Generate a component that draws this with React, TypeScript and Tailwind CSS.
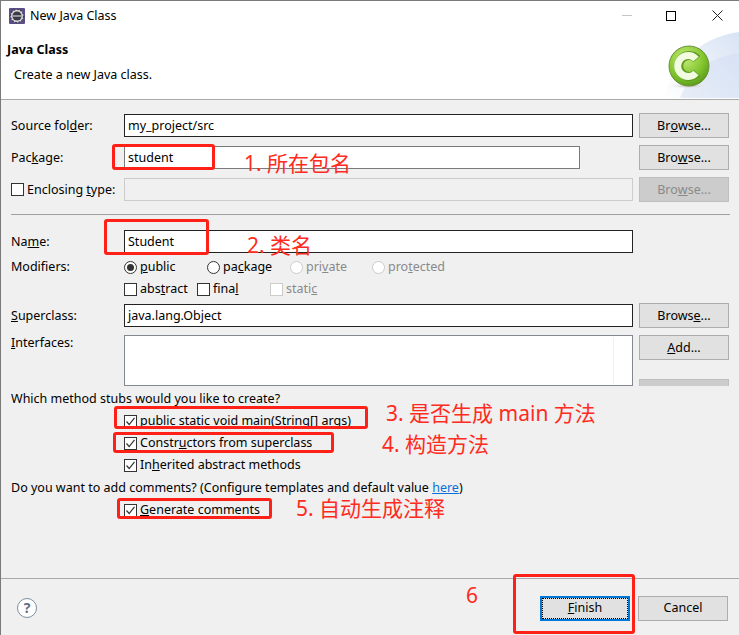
import React from "react";

const Button = ({ children, disabled }: { children: React.ReactNode; disabled?: boolean }) => (
  <div
    className={`w-[90px] h-[25px] flex items-center justify-center border ${
      disabled ? "bg-[#cccccc] border-[#bfbfbf] text-[#8a8a8a]" : "bg-[#e1e1e1] border-[#adadad] text-black"
    }`}
  >
    {children}
  </div>
);

const Check = ({ checked, disabled }: { checked?: boolean; disabled?: boolean }) => (
  <span
    className={`w-[13px] h-[13px] border bg-white flex items-center justify-center shrink-0 ${
      disabled ? "border-[#cccccc]" : "border-[#333333]"
    }`}
  >
    {checked && (
      <svg width="11" height="11" viewBox="0 0 11 11" fill="none">
        <path d="M1.5 5.5 L4.2 8.5 L9.5 1.8" stroke="#333" strokeWidth="1.2" />
      </svg>
    )}
  </span>
);

const Radio = ({ checked, disabled }: { checked?: boolean; disabled?: boolean }) => (
  <span
    className={`w-[13px] h-[13px] rounded-full border bg-white flex items-center justify-center shrink-0 ${
      disabled ? "border-[#cccccc]" : "border-[#333333]"
    }`}
  >
    {checked && <span className="w-[7px] h-[7px] rounded-full bg-[#333333]" />}
  </span>
);

const CheckRow = ({ children, className }: { children: React.ReactNode; className?: string }) => (
  <div className={`flex items-center gap-[3px] h-[22px] pl-[113px] ${className ?? ""}`}>
    <Check checked />
    <span>{children}</span>
  </div>
);

const Label = ({ children }: { children: React.ReactNode }) => <div className="w-[113px] shrink-0">{children}</div>;

const RedBox = ({ className }: { className: string }) => (
  <div className={`absolute border-[3px] border-[#ff2018] rounded-[3px] ${className}`} />
);

const Note = ({ children, className }: { children: React.ReactNode; className: string }) => (
  <div className={`absolute text-[#ff2a20] text-[21px] leading-[26px] whitespace-nowrap ${className}`}>{children}</div>
);

export default function App() {
  return (
    <div
      className="relative w-[739px] h-[635px] overflow-hidden bg-[#f0f0f0] border-l border-t border-[#7a7a7a] text-[12.5px] text-black"
      style={{ fontFamily: '"Noto Sans", "Noto Sans CJK SC", sans-serif' }}
    >
      {/* Title bar + banner */}
      <div className="relative h-[99px] bg-white border-b border-[#a9a9a9]">
        <div className="flex items-center h-[30px] pl-[8px] gap-[5px]">
          <svg width="16" height="16" viewBox="0 0 16 16">
            <rect width="16" height="16" rx="1" fill="#5d4c8c" />
            <circle cx="8" cy="8" r="6.6" fill="#d8d8d8" stroke="#444" strokeWidth="1.4" strokeDasharray="2 1.4" />
            <circle cx="8" cy="8" r="4.6" fill="#3a3a4a" />
            <rect x="3.4" y="7.4" width="9.2" height="1.2" fill="#cfcfcf" />
          </svg>
          <span>New Java Class</span>
        </div>
        <div className="absolute top-[9px] right-[-2px] flex items-center">
          <div className="w-[46px] flex justify-center pl-[4px]">
            <div className="w-[10px] h-px bg-[#c4c4c4]" />
          </div>
          <div className="w-[46px] flex justify-center">
            <div className="w-[10px] h-[10px] border border-black" />
          </div>
          <div className="w-[46px] flex justify-center mr-[1px]">
            <svg width="11" height="11" viewBox="0 0 11 11">
              <path d="M0.5 0.5 L10.5 10.5 M10.5 0.5 L0.5 10.5" stroke="#222" strokeWidth="1" />
            </svg>
          </div>
        </div>
        <div className="pl-[6px] font-bold leading-[16px] mt-[11px]">Java Class</div>
        <div className="pl-[13px] leading-[16px] mt-[9px]">Create a new Java class.</div>
        <svg className="absolute right-0 top-[30px]" width="75" height="67" viewBox="0 0 75 67">
          <defs>
            <linearGradient id="wm" x1="0" y1="1" x2="1" y2="0">
              <stop offset="0" stopColor="#ffffff" />
              <stop offset="1" stopColor="#cfdcf2" />
            </linearGradient>
            <radialGradient id="ball" cx="0.4" cy="0.3" r="0.8">
              <stop offset="0" stopColor="#c6ec7a" />
              <stop offset="0.6" stopColor="#7fc42c" />
              <stop offset="1" stopColor="#4f8f18" />
            </radialGradient>
            <radialGradient id="shadow" cx="0.5" cy="0.5" r="0.5">
              <stop offset="0" stopColor="#b8b8b8" />
              <stop offset="1" stopColor="#ffffff" stopOpacity="0" />
            </radialGradient>
          </defs>
          <path d="M0 67 C8 35 35 6 75 1 V67 Z" fill="url(#wm)" opacity="0.8" />
          <path d="M16 67 C24 45 45 25 75 22 V67 Z" fill="#cfdcf2" opacity="0.45" />
          <ellipse cx="25" cy="55" rx="24" ry="3" fill="url(#shadow)" />
          <circle cx="25" cy="35" r="20" fill="url(#ball)" stroke="#6f8f3a" strokeWidth="1" />
          <path d="M33 28 A10.5 10.5 0 1 0 33 42" fill="none" stroke="#5f9a1e" strokeWidth="9" />
          <path d="M32 28 A10.5 10.5 0 1 0 32 42" fill="none" stroke="#f0fbe0" strokeWidth="7" />
        </svg>
      </div>

      {/* Form */}
      <div className="pl-[10px] pr-[9px] pt-[13px] leading-[16px]">
        <div className="flex items-center h-[25px]">
          <Label>Source fol<u>d</u>er:</Label>
          <div className="w-[509px] h-[23px] border border-[#222222] bg-white pl-[3px] flex items-center">my_project/src</div>
          <div className="ml-[6px]"><Button>Br<u>o</u>wse...</Button></div>
        </div>
        <div className="flex items-center h-[25px] mt-[7px]">
          <Label>Pac<u>k</u>age:</Label>
          <div className="w-[456px] h-[23px] border border-[#7a7a7a] bg-white pl-[3px] flex items-center">student</div>
          <div className="ml-[59px]"><Button>Bro<u>w</u>se...</Button></div>
        </div>
        <div className="flex items-center h-[25px] mt-[7px]">
          <div className="w-[113px] shrink-0 flex items-center gap-[3px]">
            <Check />
            <span>Enclosing <u>t</u>ype:</span>
          </div>
          <div className="w-[509px] h-[23px] border border-[#cccccc] bg-[#f0f0f0]" />
          <div className="ml-[6px]"><Button disabled>Bro<u>w</u>se...</Button></div>
        </div>

        <div className="h-px bg-[#a0a0a0] mt-[12px]" />

        <div className="flex items-center h-[23px] mt-[15px]">
          <Label>Na<u>m</u>e:</Label>
          <div className="w-[509px] h-[23px] border border-[#222222] bg-white pl-[3px] flex items-center">Student</div>
        </div>
        <div className="flex items-center h-[22px] mt-[3px]">
          <Label>Modifiers:</Label>
          <div className="w-[83px] flex items-center gap-[3px]"><Radio checked /><span><u>p</u>ublic</span></div>
          <div className="w-[83px] flex items-center gap-[3px]"><Radio /><span>pa<u>c</u>kage</span></div>
          <div className="w-[82px] flex items-center gap-[3px] text-[#8a8a8a]"><Radio disabled /><span>pri<u>v</u>ate</span></div>
          <div className="flex items-center gap-[3px] text-[#8a8a8a]"><Radio disabled /><span>pro<u>t</u>ected</span></div>
        </div>
        <div className="flex items-center h-[22px]">
          <div className="w-[113px] shrink-0" />
          <div className="w-[73px] flex items-center gap-[3px]"><Check /><span>abs<u>t</u>ract</span></div>
          <div className="w-[73px] flex items-center gap-[3px]"><Check /><span>fina<u>l</u></span></div>
          <div className="flex items-center gap-[3px] text-[#8a8a8a]"><Check disabled /><span>stati<u>c</u></span></div>
        </div>
        <div className="flex items-center h-[25px] mt-[3px]">
          <Label><u>S</u>uperclass:</Label>
          <div className="w-[509px] h-[23px] border border-[#222222] bg-white pl-[3px] flex items-center">java.lang.Object</div>
          <div className="ml-[6px]"><Button>Brows<u>e</u>...</Button></div>
        </div>
        <div className="flex h-[51px] mt-[7px]">
          <Label><u>I</u>nterfaces:</Label>
          <div className="w-[509px] h-[51px] border border-[#828790] bg-white flex justify-end">
            <div className="w-[19px] border-l border-[#f0f0f0] my-px" />
          </div>
          <div className="ml-[6px] flex flex-col justify-between">
            <Button><u>A</u>dd...</Button>
            <div className="w-[90px] h-[7px] bg-[#cccccc] border-x border-t border-[#bfbfbf]" />
          </div>
        </div>

        <div className="h-[16px] mt-[5px]">Which method stubs would you like to create?</div>
        <div className="mt-[3px]">
          <CheckRow>public static <u>v</u>oid main(String[] args)</CheckRow>
          <CheckRow>Constr<u>u</u>ctors from superclass</CheckRow>
          <CheckRow>In<u>h</u>erited abstract methods</CheckRow>
        </div>
        <div className="h-[16px] mt-[4px]">
          Do you want to add comments? (Configure templates and default value{" "}
          <u className="text-[#0a6fd8]">here</u>)
        </div>
        <CheckRow className="mt-[3px]"><u>G</u>enerate comments</CheckRow>
      </div>

      {/* Footer */}
      <div className="absolute left-0 right-0 bottom-0 h-[57px] border-t border-[#a9a9a9] flex items-start">
        <div className="ml-[16px] mt-[19px] w-[20px] h-[20px] rounded-full border-[1.5px] border-[#7f8ea3] bg-white flex items-center justify-center text-[#5f6f88] font-bold text-[14px] leading-none">
          ?
        </div>
        <div className="ml-auto mr-[11px] mt-[17px] flex gap-[8px]">
          <div className="w-[90px] h-[25px] flex items-center justify-center bg-[#e1e1e1] border-2 border-[#0078d7] outline-1 outline-dotted -outline-offset-3 outline-black">
            <span><u>F</u>inish</span>
          </div>
          <div className="w-[90px] h-[25px] flex items-center justify-center bg-[#e1e1e1] border border-[#adadad]">Cancel</div>
        </div>
      </div>

      {/* Annotations drawn over the dialog */}
      <RedBox className="left-[111px] top-[143px] w-[103px] h-[26px]" />
      <RedBox className="left-[103px] top-[218px] w-[105px] h-[36px]" />
      <RedBox className="left-[113px] top-[405px] w-[254px] h-[23px]" />
      <RedBox className="left-[112px] top-[431px] w-[221px] h-[21px]" />
      <RedBox className="left-[116px] top-[497px] w-[155px] h-[21px]" />
      <RedBox className="left-[512px] top-[573px] w-[122px] h-[60px]" />
      <Note className="left-[243px] top-[149px]">1. 所在包名</Note>
      <Note className="left-[246px] top-[231px]">2. 类名</Note>
      <Note className="left-[385px] top-[399px]">3. 是否生成 main 方法</Note>
      <Note className="left-[381px] top-[430px]">4. 构造方法</Note>
      <Note className="left-[295px] top-[494px]">5. 自动生成注释</Note>
      <Note className="left-[465px] top-[581px]">6</Note>
    </div>
  );
}
